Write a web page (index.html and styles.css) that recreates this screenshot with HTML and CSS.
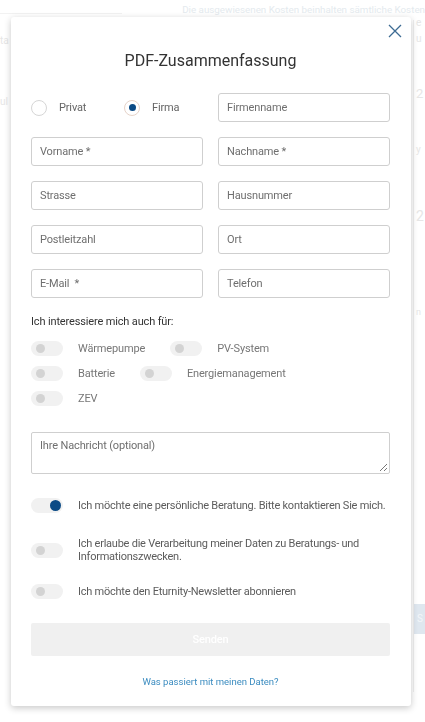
FILE: index.html
```html
<!DOCTYPE html>
<html lang="de">
<head>
<meta charset="utf-8">
<title>PDF-Zusammenfassung</title>
<link rel="stylesheet" href="styles.css">
</head>
<body>
<div class="page">
  <div class="page-top">
    <div class="page-top-line"></div>
    <div class="page-note">Die ausgewiesenen Kosten beinhalten sämtliche Kosten</div>
  </div>
  <div class="page-body">
    <div class="page-left">
      <span class="ghost g-ta">ta</span>
      <span class="ghost g-ul">ul</span>
    </div>
    <div class="page-main"></div>
    <div class="page-right">
      <span class="ghost g-en">e</span>
      <span class="ghost g-uar">u</span>
      <span class="ghost g-2">2</span>
      <span class="ghost g-yp">y</span>
      <span class="ghost g-25">2</span>
      <span class="ghost g-nr">n</span>
      <span class="ghost-btn">S</span>
    </div>
  </div>
</div>

<div class="modal">
  <button class="close" aria-label="Schliessen">
    <svg width="14" height="14" viewBox="0 0 14 14"><path d="M1 1L13 13M13 1L1 13" stroke="#3d6b93" stroke-width="1.3" fill="none"/></svg>
  </button>
  <h1 class="title">PDF-Zusammenfassung</h1>

  <div class="grid">
    <div class="radios">
      <label class="radio"><span class="dot"></span>Privat</label>
      <label class="radio checked"><span class="dot"></span>Firma</label>
    </div>
    <div class="field">Firmenname</div>
    <div class="field">Vorname *</div>
    <div class="field">Nachname *</div>
    <div class="field">Strasse</div>
    <div class="field">Hausnummer</div>
    <div class="field">Postleitzahl</div>
    <div class="field">Ort</div>
    <div class="field">E-Mail &nbsp;*</div>
    <div class="field">Telefon</div>
  </div>

  <p class="interest">Ich interessiere mich auch für:</p>
  <div class="toggles">
    <div class="trow">
      <div class="titem"><span class="tg"></span><span>Wärmepumpe</span></div>
      <div class="titem"><span class="tg"></span><span>PV-System</span></div>
    </div>
    <div class="trow">
      <div class="titem"><span class="tg"></span><span>Batterie</span></div>
      <div class="titem"><span class="tg"></span><span>Energiemanagement</span></div>
    </div>
    <div class="trow">
      <div class="titem"><span class="tg"></span><span>ZEV</span></div>
    </div>
  </div>

  <div class="textarea">Ihre Nachricht (optional)
    <svg class="grip" width="9" height="9" viewBox="0 0 9 9"><path d="M8 1L1 8M8 5L5 8" stroke="#777" stroke-width="1" fill="none"/></svg>
  </div>

  <div class="consent c1"><span class="tg on"></span><span>Ich möchte eine persönliche Beratung. Bitte kontaktieren Sie mich.</span></div>
  <div class="consent c2"><span class="tg"></span><span>Ich erlaube die Verarbeitung meiner Daten zu Beratungs- und Informationszwecken.</span></div>
  <div class="consent c3"><span class="tg"></span><span>Ich möchte den Eturnity-Newsletter abonnieren</span></div>

  <div class="send">Senden</div>
  <div class="link">Was passiert mit meinen Daten?</div>
</div>
</body>
</html>
```

FILE: styles.css
```css
* { box-sizing: border-box; }
html, body { margin: 0; padding: 0; }
body {
  width: 425px;
  height: 722px;
  overflow: hidden;
  background: #fff;
  font-family: Roboto, "Liberation Sans", sans-serif;
  color: #333;
}

/* faded page behind the dialog */
.page { height: 722px; display: flex; flex-direction: column; }
.page-top { display: flex; align-items: flex-start; height: 20px; }
.page-top-line { width: 135px; margin-top: 13px; border-top: 1px solid #f2f2f2; }
.page-note {
  margin-left: 60px;
  padding-top: 4px;
  font-size: 9.8px;
  white-space: nowrap;
  color: #e4eaee;
}
.page-body { flex: 1; display: flex; }
.page-left { width: 11px; display: flex; flex-direction: column; }
.page-main { flex: 1; }
.page-right {
  width: 12px;
  border-left: 1px solid #efefef;
  display: flex;
  flex-direction: column;
  padding-left: 2px;
  margin-bottom: 30px;
}
.ghost { color: #e6e6e6; font-size: 10px; line-height: 13px; white-space: nowrap; }
.g-ta { margin-top: 14px; }
.g-ul { margin-top: 48px; }
.g-en { margin-top: -4px; }
.g-uar { margin-top: 3px; }
.g-2 { margin-top: 40px; font-size: 13px; line-height: 18px; }
.g-yp { margin-top: 40px; }
.g-25 { margin-top: 50px; font-size: 14px; line-height: 20px; }
.g-nr { margin-top: 80px; font-size: 9px; }
.ghost-btn {
  margin-top: auto;
  margin-bottom: 58px;
  height: 30px;
  margin-left: -2px;
  background: #dfe7ef;
  color: #f3f6f9;
  font-size: 10px;
  line-height: 30px;
  padding-left: 3px;
}

/* dialog */
.modal {
  position: fixed;
  left: 11px;
  top: 17px;
  width: 400px;
  height: 689px;
  background: #fff;
  border-radius: 3px;
  box-shadow: 0 2px 7px rgba(0, 0, 0, 0.22);
  padding: 34px 21px 0 20px;
  font-size: 11px;
  letter-spacing: -0.15px;
}
.close {
  position: absolute;
  top: 7px;
  right: 9px;
  width: 14px;
  height: 14px;
  padding: 0;
  border: 0;
  background: none;
  display: block;
}
.close svg { display: block; }
.title {
  margin: 0;
  text-align: center;
  font-size: 16px;
  line-height: 20px;
  font-weight: 400;
  letter-spacing: 0;
  color: #333;
}

.grid {
  margin-top: 22px;
  display: grid;
  grid-template-columns: 172px 172px;
  column-gap: 15px;
  row-gap: 15px;
}
.radios { display: flex; align-items: center; }
.radio {
  flex: none;
  display: flex;
  align-items: center;
  gap: 12px;
  color: #666;
  width: 93px;
}
.radio .dot {
  width: 16px;
  height: 16px;
  border-radius: 50%;
  border: 1px solid #d6d6d6;
  display: flex;
  align-items: center;
  justify-content: center;
}
.radio.checked .dot { border-color: #e6d3c9; }
.radio.checked .dot::after {
  content: "";
  width: 7px;
  height: 7px;
  border-radius: 50%;
  background: #0b4a85;
}
.field {
  height: 29px;
  border: 1px solid #cfcfcf;
  border-radius: 3px;
  padding: 0 8px;
  line-height: 27px;
  color: #6f6f6f;
}

.interest {
  margin: 17px 0 0;
  line-height: 14px;
  color: #333;
}
.toggles { margin-top: 7px; display: flex; flex-direction: column; }
.trow { display: flex; height: 25px; align-items: center; }
.titem {
  display: flex;
  align-items: center;
  gap: 15px;
  margin-right: 25px;
  color: #777;
}
.tg {
  flex: none;
  width: 32px;
  height: 15px;
  border-radius: 8px;
  background: #f1f1f1;
  display: flex;
  align-items: center;
  padding: 0 5px;
}
.tg::after {
  content: "";
  width: 9px;
  height: 9px;
  border-radius: 50%;
  background: #d3d3d3;
}
.tg.on { justify-content: flex-end; padding: 0 2px; }
.tg.on::after { width: 11px; height: 11px; background: #0b4a85; }

.textarea {
  position: relative;
  margin-top: 21px;
  height: 42px;
  border: 1px solid #cfcfcf;
  border-radius: 2px;
  padding: 6px 8px;
  line-height: 14px;
  color: #6f6f6f;
}
.grip { position: absolute; right: 1px; bottom: 1px; }

.consent {
  display: flex;
  align-items: center;
  gap: 15px;
  min-height: 20px;
  line-height: 13px;
  letter-spacing: -0.24px;
  color: #5c5c5c;
}
.consent.c1 { margin-top: 21px; }
.consent.c2 { margin-top: 22px; }
.consent.c3 { margin-top: 18px; }

.send {
  margin-top: 22px;
  height: 33px;
  background: #f0f0f0;
  border-radius: 2px;
  color: #fff;
  font-weight: 500;
  text-align: center;
  line-height: 33px;
}
.link {
  margin-top: 20px;
  text-align: center;
  font-size: 9.5px;
  line-height: 12px;
  letter-spacing: 0;
  color: #3b8cc0;
}
```
